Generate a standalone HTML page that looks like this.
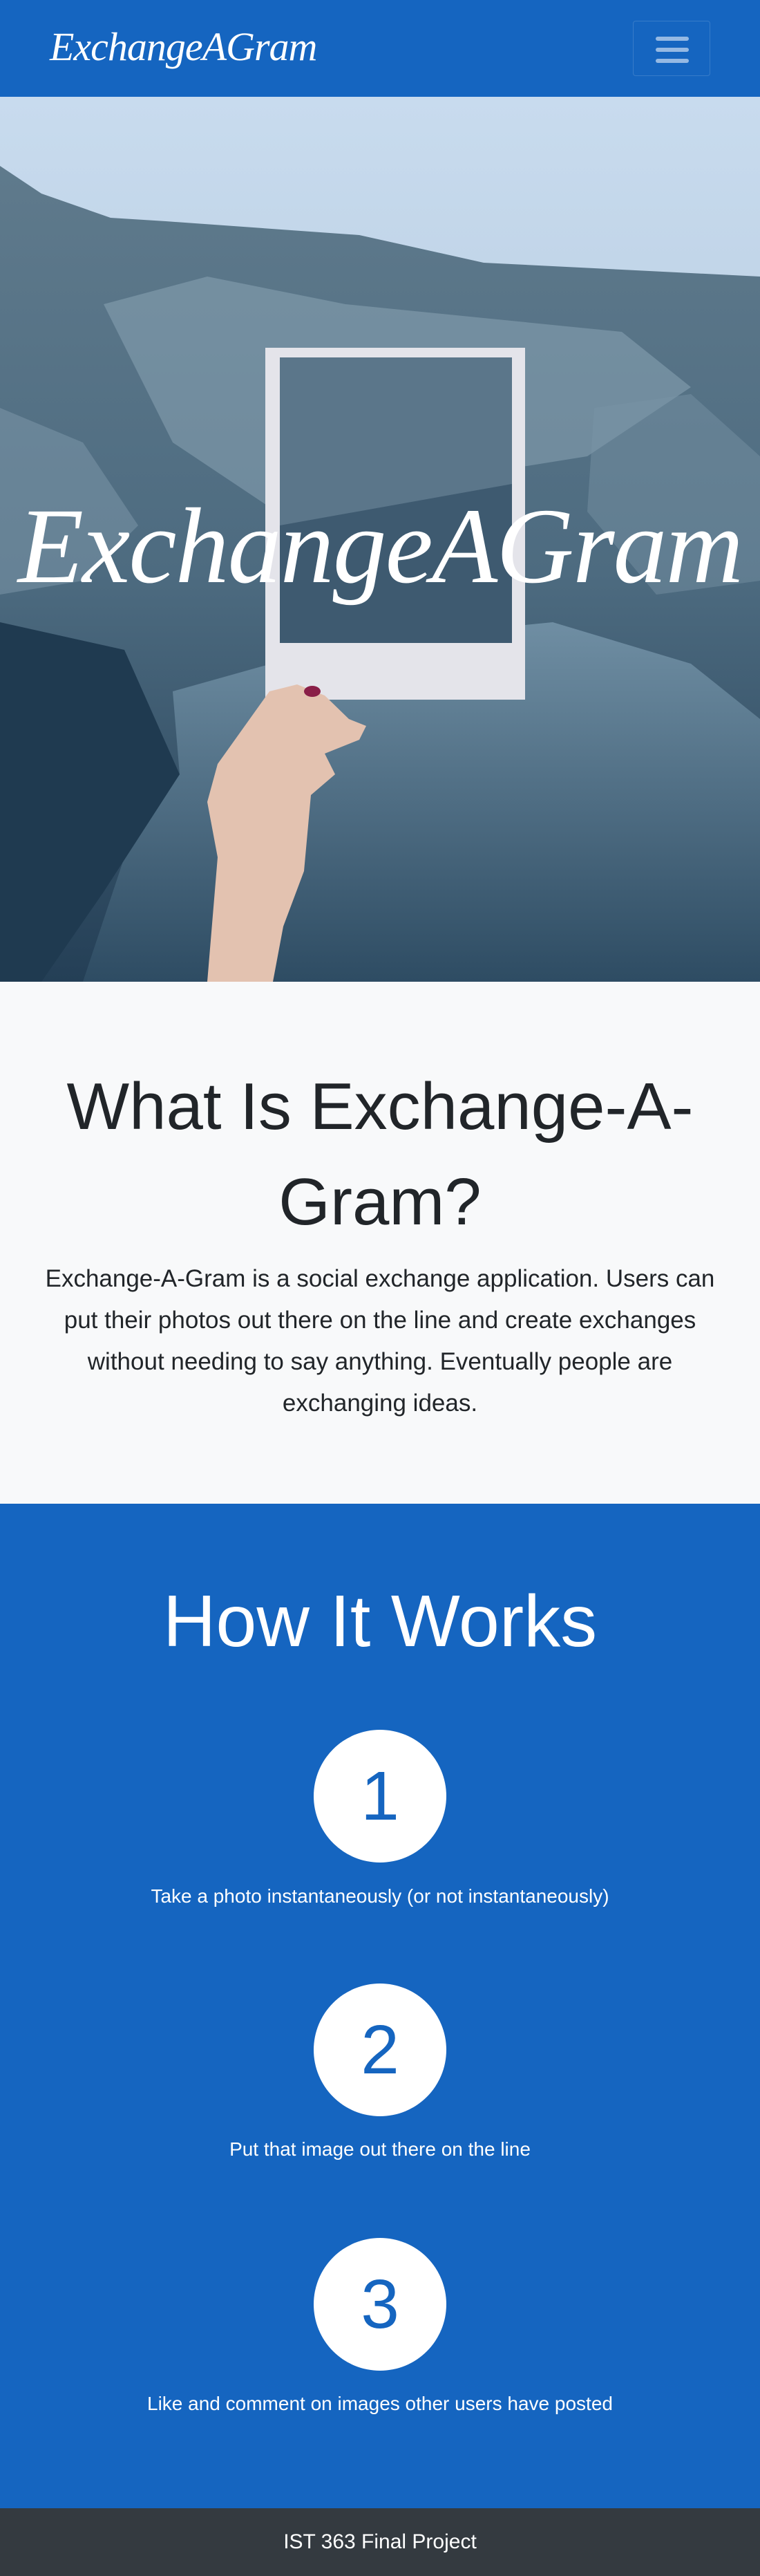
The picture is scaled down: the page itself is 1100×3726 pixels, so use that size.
<!DOCTYPE html>
<html><head><meta charset="utf-8"><style>
*{margin:0;padding:0;box-sizing:border-box}
body{width:1100px;height:3726px;font-family:"Liberation Sans",sans-serif;background:#fff;overflow:hidden}
nav{height:140px;background:#1565c0;position:relative}
.brand{position:absolute;left:72px;top:34px;color:#fff;font-family:"Liberation Serif",serif;font-style:italic;font-size:58px;letter-spacing:-1px}
.tog{position:absolute;left:916px;top:30px;width:112px;height:80px;border:1px solid rgba(255,255,255,.15);border-radius:4px}
.tog i{position:absolute;left:32px;width:48px;height:6px;border-radius:3px;background:rgba(255,255,255,.55)}
.hero{position:relative;height:1280px;overflow:hidden}
.about{height:755px;background:#f8f9fa;text-align:center;padding-top:112px}
.about h1{font-weight:300;font-size:96px;line-height:138px;color:#212529;white-space:nowrap}
.about p{font-size:35px;line-height:60px;color:#212529;font-weight:300;margin-top:12px;white-space:nowrap}
.how{height:1453px;background:#1565c0;color:#fff;text-align:center;position:relative}
.c{position:absolute;left:454px;width:192px;height:192px;border-radius:50%;background:#fff;color:#1565c0;font-size:100px;line-height:192px;text-align:center;font-weight:300}
.t{position:absolute;left:0;right:0;font-size:28px;color:#fff;text-align:center}
footer{height:98px;background:#343a40;color:#fff;text-align:center;font-size:30px;line-height:98px}
</style></head><body>
<nav><div class="brand">ExchangeAGram</div><div class="tog"><i style="top:22px"></i><i style="top:38px"></i><i style="top:54px"></i></div></nav>
<div class="hero">
<svg width="1100" height="1280" viewBox="0 0 1100 1280" style="position:absolute;left:0;top:0">
<defs>
<linearGradient id="sky" x1="0" y1="0" x2="0" y2="1"><stop offset="0" stop-color="#c8dbee"/><stop offset="1" stop-color="#a9bfd3"/></linearGradient>
<linearGradient id="cliff" x1="0" y1="0" x2="0" y2="1"><stop offset="0" stop-color="#5f7a8c"/><stop offset=".5" stop-color="#4d6b80"/><stop offset="1" stop-color="#243f56"/></linearGradient>
<linearGradient id="water" x1="0" y1="0" x2="0" y2="1"><stop offset="0" stop-color="#6f8ea3"/><stop offset="1" stop-color="#2e4c63"/></linearGradient>
</defs>
<rect width="1100" height="1280" fill="url(#sky)"/>
<path d="M0 100 L60 140 L160 175 L240 180 L520 200 L700 240 L900 250 L1100 260 L1100 1280 L0 1280Z" fill="url(#cliff)"/>
<path d="M150 300 L300 260 L500 300 L700 320 L900 340 L1000 420 L850 520 L600 560 L400 600 L250 500Z" fill="#8aa4b5" opacity=".55"/>
<path d="M0 450 L120 500 L200 620 L120 700 L0 720Z" fill="#7f9aac" opacity=".5"/>
<path d="M860 450 L1000 430 L1100 520 L1100 700 L950 720 L850 600Z" fill="#7994a7" opacity=".45"/>
<path d="M250 860 L500 790 L800 760 L1000 820 L1100 900 L1100 1280 L120 1280 L180 1100 L260 980Z" fill="url(#water)"/>
<path d="M0 760 L180 800 L260 980 L150 1150 L60 1280 L0 1280Z" fill="#1f3a50"/>
<rect x="384" y="363" width="376" height="509" fill="#e4e4ea"/>
<rect x="405" y="377" width="336" height="413" fill="#3e5a70"/>
<path d="M405 377 H741 V560 L405 620Z" fill="#6f899b" opacity=".6"/>
<path d="M300 1280 L315 1100 L300 1020 L315 965 L390 860 L430 850 L470 866 L505 900 L530 910 L520 930 L470 950 L485 980 L450 1010 L440 1120 L410 1200 L395 1280Z" fill="#e3c2b0"/>
<ellipse cx="452" cy="860" rx="12" ry="8" fill="#8a1f48"/>
</svg>
<div style="position:absolute;left:0;right:0;top:560px;text-align:center;color:#fff;font-family:'Liberation Serif',serif;font-style:italic;font-size:156px;letter-spacing:-2px">ExchangeAGram</div>
</div>
<div class="about"><h1>What Is Exchange-A-<br>Gram?</h1><p>Exchange-A-Gram is a social exchange application. Users can<br>put their photos out there on the line and create exchanges<br>without needing to say anything. Eventually people are<br>exchanging ideas.</p></div>
<div class="how">
<div style="position:absolute;top:105px;left:0;right:0;font-size:106px;font-weight:300;line-height:130px">How It Works</div>
<div class="c" style="top:327px">1</div><div class="t" style="top:552px">Take a photo instantaneously (or not instantaneously)</div>
<div class="c" style="top:694px">2</div><div class="t" style="top:918px">Put that image out there on the line</div>
<div class="c" style="top:1062px">3</div><div class="t" style="top:1286px">Like and comment on images other users have posted</div>
</div>
<footer>IST 363 Final Project</footer>
</body></html>
